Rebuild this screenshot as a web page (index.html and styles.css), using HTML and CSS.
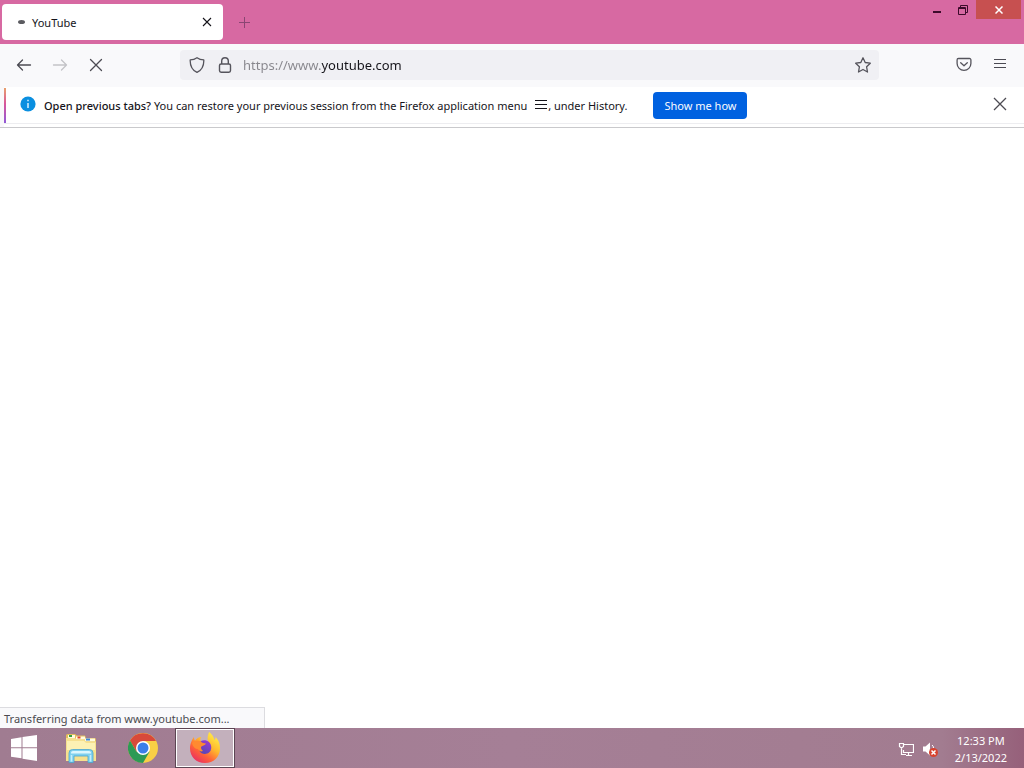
FILE: index.html
```html
<!DOCTYPE html>
<html lang="en">
<head>
    <meta charset="UTF-8">
    <meta name="viewport" content="width=device-width, initial-scale=1.0">
    <title>YouTube</title>
    <link rel="stylesheet" href="styles.css">
</head>
<body>
    <!-- Tab strip and window controls -->
    <header class="tab-strip">
        <div class="tab">
            <span class="tab-spinner"></span>
            <span class="tab-title">YouTube</span>
            <button class="icon-button tab-close" aria-label="Close tab">
                <svg width="10" height="10" viewBox="0 0 10 10"><path d="M1 1l8 8M9 1L1 9" stroke="#15141a" stroke-width="1.1"/></svg>
            </button>
        </div>
        <button class="icon-button new-tab" aria-label="New tab">
            <svg width="11" height="11" viewBox="0 0 11 11"><path d="M5.500 0v11M0 5.500h11" stroke="#8a4673" stroke-width="1"/></svg>
        </button>
        <div class="window-controls">
            <button class="window-button" aria-label="Minimize">
                <svg width="10" height="10" viewBox="0 0 10 10"><path d="M1 6h8v2H1z" fill="#3c0b2b"/></svg>
            </button>
            <button class="window-button" aria-label="Restore">
                <svg width="10" height="10" viewBox="0 0 10 10" fill="none" stroke="#3c0b2b"><path d="M.5 2.500h7v7h-7zM.5 3.500h7M2.500 2V.5h7v7H8"/></svg>
            </button>
            <button class="window-button window-close" aria-label="Close">
                <svg width="8" height="8" viewBox="0 0 8 8"><path d="M.5 .5l7 7M7.500 .5l-7 7" stroke="#fff" stroke-width="1.500"/></svg>
            </button>
        </div>
    </header>

    <!-- Navigation toolbar -->
    <nav class="toolbar">
        <div class="nav-buttons">
            <button class="icon-button" aria-label="Back">
                <svg width="16" height="16" viewBox="0 0 16 16" fill="none" stroke="#4c4b53" stroke-width="1.3" stroke-linecap="round" stroke-linejoin="round"><path d="M14.500 8H1.500M6.500 3L1.500 8l5 5"/></svg>
            </button>
            <button class="icon-button" aria-label="Forward" disabled>
                <svg width="16" height="16" viewBox="0 0 16 16" fill="none" stroke="#c3c3c7" stroke-width="1.3" stroke-linecap="round" stroke-linejoin="round"><path d="M1.500 8h13M9.500 3l5 5-5 5"/></svg>
            </button>
            <button class="icon-button" aria-label="Stop">
                <svg width="16" height="16" viewBox="0 0 16 16" fill="none" stroke="#4c4b53" stroke-width="1.3" stroke-linecap="round"><path d="M2.500 2.500l11 11M13.500 2.500l-11 11"/></svg>
            </button>
        </div>
        <div class="url-bar">
            <div class="url-icons">
                <svg width="16" height="16" viewBox="0 0 16 16" fill="none" stroke="#55545c" stroke-width="1.3" stroke-linejoin="round"><path d="M8 .7C6.200 2 3.800 2.800 1.200 2.900 1 8.500 3 13 8 15.400 13 13 15 8.500 14.800 2.900 12.200 2.800 9.800 2 8 .7z"/></svg>
                <svg width="16" height="16" viewBox="0 0 16 16" fill="none" stroke="#55545c" stroke-width="1.4"><rect x="2.500" y="7" width="11" height="8.200" rx="1.600"/><path d="M4.700 7V4a3.300 3.300 0 0 1 6.600 0v3"/></svg>
            </div>
            <input class="url-input" type="text" value="https://www.youtube.com" aria-label="Address" spellcheck="false">
            <button class="icon-button" aria-label="Bookmark this page">
                <svg width="16" height="16" viewBox="0 0 16 16" fill="none" stroke="#55545c" stroke-width="1.300" stroke-linejoin="round"><path d="M8 .8l2.200 4.700 5.100.7-3.700 3.600.9 5.200L8 12.500l-4.500 2.500.9-5.200L.7 6.200l5.100-.7z"/></svg>
            </button>
        </div>
        <div class="toolbar-actions">
            <button class="icon-button" aria-label="Save to Pocket">
                <svg width="16" height="16" viewBox="0 0 16 16" fill="none" stroke="#55545c" stroke-width="1.300" stroke-linecap="round" stroke-linejoin="round"><path d="M2.500 1.500h11a1.400 1.400 0 0 1 1.400 1.400v3.600a6.900 6.900 0 0 1-13.800 0V2.900a1.400 1.400 0 0 1 1.400-1.400zM4.700 5.700L8 8.700l3.300-3"/></svg>
            </button>
            <button class="icon-button" aria-label="Open application menu">
                <svg width="16" height="16" viewBox="0 0 16 16"><path d="M2 2.500h12M2 6.500h12M2 10.500h12" stroke="#4c4b53" stroke-width="1.200"/></svg>
            </button>
        </div>
    </nav>

    <!-- Session restore message -->
    <section class="notification">
        <svg class="info-icon" width="16" height="16" viewBox="0 0 16 16"><circle cx="8" cy="8" r="7.600" fill="#0a8fe0"/><path d="M8 7v5M8 3.700v1.600" stroke="#d8f1ff" stroke-width="1.500"/></svg>
        <p class="notification-text"><strong>Open previous tabs?</strong> You can restore your previous session from the Firefox application menu <svg class="menu-glyph" width="14" height="12" viewBox="0 0 14 12"><path d="M1 2.500h12M1 6.500h12M1 10.500h12" stroke="#15141a" stroke-width="1.200"/></svg>, under History.</p>
        <button class="primary-button">Show me how</button>
        <button class="icon-button notification-close" aria-label="Dismiss">
            <svg width="14" height="14" viewBox="0 0 14 14"><path d="M1 1l12 12M13 1L1 13" stroke="#4c4b53" stroke-width="1.300"/></svg>
        </button>
    </section>

    <main class="page">
        <div class="status-text">Transferring data from www.youtube.com...</div>
    </main>

    <!-- Taskbar -->
    <footer class="taskbar">
        <button class="task-button start-button" aria-label="Start">
            <svg width="28" height="26" viewBox="0 0 28 26" fill="#fff"><path d="M1 4l10.500-1.700v10H1zM12.500 2.100L27 0v12.300H12.500zM1 13.300h10.500v10L1 21.800zM12.500 13.300H27V26l-14.500-2.300z"/></svg>
        </button>
        <button class="task-button" aria-label="File Explorer">
            <svg width="32" height="30" viewBox="0 0 32 30">
                <path d="M1 2.500Q1 1 2.500 1H10l2 1.500h8L21 5h9q1 0 1 1.500V28H1z" fill="#e3bd5c"/>
                <path d="M3 2h7v3H3zM11 3.500h9v3h-9zM20 5.500h10v3H20z" fill="#fffbe0"/>
                <path d="M4 2h3v2H4z" fill="#35a040"/><path d="M12.500 3.500h3v2h-3z" fill="#e0482e"/><path d="M21 5.500h4v2h-4z" fill="#3d86d8"/>
                <path d="M1 5h9l2 1.500h7l2 2h10V28H1z" fill="#f6e08e"/>
                <path d="M2 8h17l2 2h9v7H2z" fill="#fcf1b4"/>
                <path d="M4 29.500V20q0-3.500 3.500-3.500h17Q28 16.500 28 20v9.500h-5V23H9v6.500z" fill="#7fd0ee" stroke="#4aa6cf" stroke-width=".8"/>
                <path d="M6 19.500q0-1.500 2-1.500h16q2 0 2 1.500v1H6z" fill="#dcf6fd"/>
                <path d="M6.500 22v6.500M25.500 22v6.500" stroke="#c3edfa" stroke-width="1.500"/>
            </svg>
        </button>
        <button class="task-button" aria-label="Google Chrome">
            <svg width="30" height="30" viewBox="0 0 30 30">
                <circle cx="15" cy="15" r="15" fill="#f8cf45"/>
                <path d="M15 15L8.500 18.700 2 7.500A15 15 0 0 1 28 8H15z" fill="#d8493a"/>
                <path d="M2 7.500A15 15 0 0 0 15 30l6.500-11.200L15 15l-6.500 3.700z" fill="#2d9a55"/>
                <circle cx="15" cy="15" r="7" fill="#fff"/><circle cx="15" cy="15" r="5.500" fill="#3b7fe8"/>
            </svg>
        </button>
        <button class="task-button active" aria-label="Mozilla Firefox">
            <svg width="32" height="32" viewBox="0 0 32 32">
                <defs>
                    <linearGradient id="flame" x1=".85" y1=".05" x2=".2" y2=".95"><stop offset="0" stop-color="#fff04a"/><stop offset=".4" stop-color="#ffb82e"/><stop offset=".7" stop-color="#ff6238"/><stop offset="1" stop-color="#ea2f62"/></linearGradient>
                    <linearGradient id="globe" x1=".7" y1="0" x2=".2" y2="1"><stop offset="0" stop-color="#9a3bd0"/><stop offset="1" stop-color="#5247b4"/></linearGradient>
                </defs>
                <path d="M20 0c4 3 5 6 5.500 8 1-1 1-2 1-3 4 4 4.500 8 4.500 11.500C31 25 24.500 31 16 31S1 25 1 16.500C1 11 3.500 7 5 5c0 2 .5 3 1 3.500C8 6 10 5 12.500 5 11 6.500 11 8 12 9h7c-1-3 0-6 1-9z" fill="url(#flame)"/>
                <path d="M12 9c2-1.500 6-1 8 1 3 3 3 8 0 10.500-3 2.500-8 1.500-9.500-1.500C9 16 10 11 12 9z" fill="url(#globe)"/>
                <path d="M3 11c2-2 6-3 9-1.500 1 1.500 3 1.500 5 2-1 2.500-5 2-5 4 0 1.500 1 2.500 2 3.500-2 1-4 0-5-2-3 0-5-2-6-6z" fill="#ff8a30"/>
            </svg>
        </button>
        <div class="tray">
            <svg width="16" height="16" viewBox="0 0 16 16" fill="none" stroke="#fff"><path d="M6 3.500h9.500v8H5.500V9M8 14.500h6M10.500 12v2M1.500 2.500h4v3l-2 1.500-2-1.500zM3.500 7v6.500H8" stroke-width="1.200"/></svg>
            <svg width="16" height="16" viewBox="0 0 16 16"><path d="M1 5.500h2.500L8 1.500v13L3.500 10.500H1z" fill="#fff"/><path d="M10 4q1.500 1 1.500 3" fill="none" stroke="#fff"/><circle cx="11.500" cy="11.500" r="4.500" fill="#d8432f"/><path d="M9.500 9.500l4 4M13.500 9.500l-4 4" stroke="#fff" stroke-width="1.500"/></svg>
            <div class="clock">
                <span>12:33 PM</span>
                <span>2/13/2022</span>
            </div>
        </div>
    </footer>
</body>
</html>
```
FILE: styles.css
```css
* {
    box-sizing: border-box;
    margin: 0;
    padding: 0;
}

body {
    display: flex;
    flex-direction: column;
    min-height: 100vh;
    background-color: #fff;
    color: #15141a;
    font-family: 'Noto Sans', sans-serif;
    font-size: 11px;
}

button {
    border: none;
    background: none;
    font-family: inherit;
    font-size: inherit;
}

svg {
    display: block;
    flex-shrink: 0;
}

.icon-button {
    display: flex;
    align-items: center;
    justify-content: center;
}

/* --- Tab strip --- */
.tab-strip {
    display: flex;
    align-items: center;
    height: 44px;
    padding-left: 2px;
    background-color: #d769a2;
}

.tab {
    display: flex;
    align-items: center;
    width: 221px;
    height: 36px;
    padding: 0 11px 0 16px;
    border-radius: 4px;
    background-color: #fff;
}

.tab-spinner {
    width: 7px;
    height: 4px;
    border-radius: 50%;
    background-color: #5b5b60;
}

.tab-title {
    flex: 1;
    margin-left: 7px;
}

.new-tab {
    margin-left: 16px;
}

.window-controls {
    display: flex;
    align-self: flex-start;
    margin-left: auto;
    padding-right: 3px;
}

.window-button {
    display: flex;
    align-items: center;
    justify-content: center;
    width: 26px;
    height: 19px;
}

.window-close {
    width: 45px;
    background-color: #c75050;
}

/* --- Navigation toolbar --- */
.toolbar {
    display: flex;
    align-items: center;
    height: 43px;
    padding: 0 16px 2px;
    background-color: #f9f9fb;
}

.nav-buttons,
.toolbar-actions {
    display: flex;
    gap: 20px;
}

.url-bar {
    display: flex;
    flex: 1;
    align-items: center;
    gap: 10px;
    height: 30px;
    margin: 0 77px 0 76px;
    padding: 0 8px 0 9px;
    border-radius: 4px;
    background-color: #f0f0f4;
}

.url-icons {
    display: flex;
    gap: 12px;
}

/* The scheme and subdomain are dimmed, the domain is dark */
.url-input {
    flex: 1;
    min-width: 0;
    border: none;
    outline: none;
    background: linear-gradient(to right, #87868c 78px, #15141a 78px);
    -webkit-background-clip: text;
    background-clip: text;
    color: transparent;
    font-family: inherit;
    font-size: 13px;
}

/* --- Notification --- */
.notification {
    display: flex;
    align-items: center;
    min-height: 41px;
    padding: 0 17px 3px 20px;
    border-bottom: 1px solid #c9c9cc;
    background:
        linear-gradient(#e8a06c, #d8569b 45%, #9059d8) 4px 1px / 2px 35px no-repeat,
        linear-gradient(#f9f9fb, #f9f9fb) 0 0 / 4px 100% no-repeat,
        linear-gradient(#ededf0, #ededf0) 0 36px / 100% 1px no-repeat;
}

.info-icon,
.notification-close {
    margin-bottom: 3px;
}

.notification-text {
    margin: 0 26px 0 8px;
}

.notification-text strong {
    font-weight: 500;
}

.menu-glyph {
    display: inline-block;
    margin-left: 4px;
}

.primary-button {
    height: 27px;
    padding: 0 11px;
    border-radius: 4px;
    background-color: #0061e0;
    color: #fbfbfe;
}

.notification-close {
    margin-left: auto;
}

/* --- Page area --- */
.page {
    display: flex;
    flex: 1;
    align-items: flex-end;
}

.status-text {
    width: 265px;
    height: 21px;
    padding-left: 4px;
    border: 1px solid #dcdce0;
    border-width: 1px 1px 0 0;
    background-color: #f9f9fb;
    color: #4a4a4f;
    line-height: 21px;
}

/* --- Taskbar --- */
.taskbar {
    display: flex;
    align-items: stretch;
    height: 40px;
    background: linear-gradient(to right, #a07c91, #a57f96 50%, #a27c90 92%, #96607a);
}

.task-button {
    display: flex;
    align-items: center;
    justify-content: center;
    width: 60px;
    margin-right: 2px;
}

.start-button {
    width: 48px;
    margin-right: 3px;
}

.task-button.active {
    border: 1px solid #5c4553;
    box-shadow: inset 0 0 0 1px #fff;
    background-color: #c3b0bc;
}

.tray {
    display: flex;
    align-items: center;
    gap: 8px;
    margin-left: auto;
    padding: 1px 17px 0 0;
    color: #fff;
}

.clock {
    display: flex;
    flex-direction: column;
    align-items: center;
    margin-left: 9px;
    line-height: 17px;
}
```
